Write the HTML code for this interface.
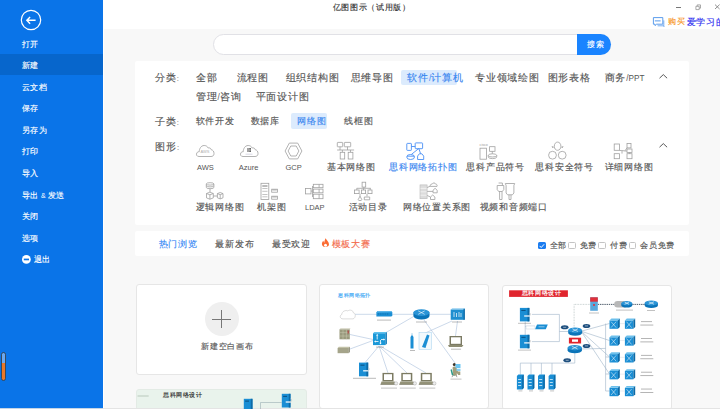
<!DOCTYPE html>
<html><head><meta charset="utf-8">
<style>
*{margin:0;padding:0;box-sizing:border-box}
html,body{width:720px;height:409px;overflow:hidden;background:#f8f8f8;font-family:"Liberation Sans",sans-serif;color:#555;position:relative}
.a{position:absolute}
.t{position:absolute;white-space:nowrap}
.t span{line-height:inherit}
.c{-webkit-text-stroke:0.15px currentColor}
.card{position:absolute;background:#fff;border-radius:2px}
svg{position:absolute;overflow:visible}
</style></head><body>
<div class="a" style="left:0;top:0;width:103px;height:409px;background:#0a74e8"></div>
<div class="a" style="left:0;top:54px;width:103px;height:21px;background:#0766cc"></div>
<svg style="left:20px;top:9px" width="22" height="22" viewBox="0 0 22 22"><circle cx="11" cy="11" r="9.7" fill="none" stroke="#fff" stroke-width="1.2"/><path d="M6.8 11.3H15.6M10.1 7.9L6.8 11.3L10.1 14.7" fill="none" stroke="#fff" stroke-width="1.4"/></svg>
<div class="t" style="left:21.76px;top:39.80px;font-size:8.40px;line-height:8.40px;color:#fff;"><span class="c" style="letter-spacing:0.70px">打开</span></div>
<div class="t" style="left:21.76px;top:60.80px;font-size:8.40px;line-height:8.40px;color:#fff;"><span class="c" style="letter-spacing:0.70px">新建</span></div>
<div class="t" style="left:21.76px;top:82.80px;font-size:8.40px;line-height:8.40px;color:#fff;"><span class="c" style="letter-spacing:0.70px">云文档</span></div>
<div class="t" style="left:21.76px;top:104.30px;font-size:8.40px;line-height:8.40px;color:#fff;"><span class="c" style="letter-spacing:0.70px">保存</span></div>
<div class="t" style="left:21.76px;top:125.80px;font-size:8.40px;line-height:8.40px;color:#fff;"><span class="c" style="letter-spacing:0.70px">另存为</span></div>
<div class="t" style="left:21.76px;top:147.30px;font-size:8.40px;line-height:8.40px;color:#fff;"><span class="c" style="letter-spacing:0.70px">打印</span></div>
<div class="t" style="left:21.76px;top:168.80px;font-size:8.40px;line-height:8.40px;color:#fff;"><span class="c" style="letter-spacing:0.70px">导入</span></div>
<div class="t" style="left:21.76px;top:190.80px;font-size:8.40px;line-height:8.40px;color:#fff;"><span class="c" style="letter-spacing:0.70px">导出</span><span style="font-size:7.00px"> &amp; </span><span class="c" style="letter-spacing:0.70px">发送</span></div>
<div class="t" style="left:21.76px;top:212.30px;font-size:8.40px;line-height:8.40px;color:#fff;"><span class="c" style="letter-spacing:0.70px">关闭</span></div>
<div class="t" style="left:21.76px;top:233.80px;font-size:8.40px;line-height:8.40px;color:#fff;"><span class="c" style="letter-spacing:0.70px">选项</span></div>
<svg style="left:22px;top:255px" width="9" height="9"><circle cx="4.4" cy="4.4" r="4.4" fill="#fff"/><rect x="1.8" y="3.6" width="5.2" height="1.7" fill="#0a74e8"/></svg>
<div class="t" style="left:33.56px;top:255.30px;font-size:8.40px;line-height:8.40px;color:#fff;"><span class="c" style="letter-spacing:0.70px">退出</span></div>
<div class="a" style="left:1px;top:352px;width:5px;height:29px;border:1px solid #3a4a5a;border-radius:3px;background:linear-gradient(#6aa8f0 0 36%,#e8782a 36%)"></div>
<div class="a" style="left:103px;top:0;width:1px;height:409px;background:#fff"></div>
<div class="a" style="left:104px;top:0;width:616px;height:29px;background:#fff"></div>
<div class="t" style="left:332.83px;top:3.96px;font-size:7.68px;line-height:7.68px;color:#333;"><span class="c" style="letter-spacing:0.64px">亿图图示（试用版）</span></div>
<div class="a" style="left:676px;top:7px;width:4.5px;height:0.8px;background:#777"></div>
<svg style="left:695px;top:3.5px" width="7" height="7"><path d="M0.9 2.3h3.3v3.3h-3.3z M2.2 2.3v-1.4h3.3v3.3h-1.3" fill="none" stroke="#888" stroke-width="0.7"/></svg>
<svg style="left:714px;top:4px" width="7" height="6"><path d="M1 0.6l4.6 4.4M5.6 0.6l-4.6 4.4" stroke="#777" stroke-width="0.8"/></svg>
<svg style="left:652px;top:16px" width="14" height="12"><path d="M1.4 1.6h9.4v6.6h-6.2l-1.6 1.4v-1.4h-1.6z" fill="#fff" stroke="#4a92ea" stroke-width="0.9" stroke-linejoin="round"/><rect x="2.8" y="4.2" width="5.8" height="1.3" fill="#7fb2f0"/><path d="M11.8 4.4v5.4h-6.2M11.8 9.8l0.3 1.2" fill="none" stroke="#5a9cec" stroke-width="0.8"/></svg>
<div class="t" style="left:668.08px;top:18.39px;font-size:8.22px;line-height:8.22px;color:#f7941d;"><span class="c" style="letter-spacing:0.69px">购买</span></div>
<div class="t" style="left:686.74px;top:18.18px;font-size:8.64px;line-height:8.64px;color:#3030f0;"><span class="c" style="letter-spacing:0.72px">爱学习的</span><span style="font-size:7.00px">...</span></div>
<div class="a" style="left:213px;top:34px;width:398px;height:21px;border:1px solid #e1e1e6;border-radius:11px;background:#fff"></div>
<div class="a" style="left:577px;top:34px;width:34px;height:21px;border-radius:0 11px 11px 0;background:#1a84ff"></div>
<div class="t" style="left:587.30px;top:40.61px;font-size:7.98px;line-height:7.98px;color:#fff;"><span class="c" style="letter-spacing:0.67px">搜索</span></div>
<div class="card" style="left:135px;top:61px;width:554px;height:164px"></div>
<div class="a" style="left:401px;top:69.5px;width:56px;height:15.5px;background:#dcebfd;border-radius:2px"></div>
<div class="a" style="left:291px;top:113px;width:36px;height:16px;background:#dcebfd;border-radius:2px"></div>
<div class="t" style="left:155.14px;top:72.90px;font-size:9.60px;line-height:9.60px;color:#555;"><span class="c" style="letter-spacing:0.80px">分类</span><span style="font-size:7.50px">:</span></div>
<div class="t" style="left:195.84px;top:72.90px;font-size:9.60px;line-height:9.60px;color:#555;"><span class="c" style="letter-spacing:0.80px">全部</span></div>
<div class="t" style="left:236.64px;top:72.90px;font-size:9.60px;line-height:9.60px;color:#555;"><span class="c" style="letter-spacing:0.80px">流程图</span></div>
<div class="t" style="left:285.64px;top:72.90px;font-size:9.60px;line-height:9.60px;color:#555;"><span class="c" style="letter-spacing:0.80px">组织结构图</span></div>
<div class="t" style="left:350.64px;top:72.90px;font-size:9.60px;line-height:9.60px;color:#555;"><span class="c" style="letter-spacing:0.80px">思维导图</span></div>
<div class="t" style="left:475.04px;top:72.90px;font-size:9.60px;line-height:9.60px;color:#555;"><span class="c" style="letter-spacing:0.80px">专业领域绘图</span></div>
<div class="t" style="left:547.64px;top:72.90px;font-size:9.60px;line-height:9.60px;color:#555;"><span class="c" style="letter-spacing:0.80px">图形表格</span></div>
<div class="t" style="left:604.64px;top:72.90px;font-size:9.60px;line-height:9.60px;color:#555;"><span class="c" style="letter-spacing:0.80px">商务</span><span style="font-size:8.20px">/PPT</span></div>
<div class="t" style="left:407.44px;top:72.60px;font-size:9.60px;line-height:9.60px;color:#3a86f0;"><span class="c" style="letter-spacing:0.80px">软件</span><span style="font-size:8.20px">/</span><span class="c" style="letter-spacing:0.80px">计算机</span></div>
<div class="t" style="left:195.84px;top:91.50px;font-size:9.60px;line-height:9.60px;color:#555;"><span class="c" style="letter-spacing:0.80px">管理</span><span style="font-size:8.20px">/</span><span class="c" style="letter-spacing:0.80px">咨询</span></div>
<div class="t" style="left:255.64px;top:91.50px;font-size:9.60px;line-height:9.60px;color:#555;"><span class="c" style="letter-spacing:0.80px">平面设计图</span></div>
<div class="t" style="left:155.14px;top:116.90px;font-size:9.60px;line-height:9.60px;color:#555;"><span class="c" style="letter-spacing:0.80px">子类</span><span style="font-size:7.50px">:</span></div>
<div class="t" style="left:195.70px;top:117.20px;font-size:9.00px;line-height:9.00px;color:#555;"><span class="c" style="letter-spacing:0.75px">软件开发</span></div>
<div class="t" style="left:250.70px;top:117.20px;font-size:9.00px;line-height:9.00px;color:#555;"><span class="c" style="letter-spacing:0.75px">数据库</span></div>
<div class="t" style="left:344.30px;top:117.20px;font-size:9.00px;line-height:9.00px;color:#555;"><span class="c" style="letter-spacing:0.75px">线框图</span></div>
<div class="t" style="left:297.20px;top:117.00px;font-size:9.00px;line-height:9.00px;color:#3a86f0;"><span class="c" style="letter-spacing:0.75px">网络图</span></div>
<div class="t" style="left:155.44px;top:141.90px;font-size:9.60px;line-height:9.60px;color:#555;"><span class="c" style="letter-spacing:0.80px">图形</span><span style="font-size:7.50px">:</span></div>
<svg style="left:659px;top:73.6px" width="10" height="6"><path d="M0.5 4.2L4.3 0.6L8.1 4.2" fill="none" stroke="#444" stroke-width="0.9"/></svg>
<svg style="left:659px;top:142.9px" width="10" height="6"><path d="M0.5 4.2L4.3 0.6L8.1 4.2" fill="none" stroke="#444" stroke-width="0.9"/></svg>
<div class="t" style="left:196.92px;top:163.19px;font-size:8.82px;line-height:8.82px;color:#555;"><span style="font-size:7.50px">AWS</span></div>
<div class="t" style="left:238.72px;top:163.19px;font-size:8.82px;line-height:8.82px;color:#555;"><span style="font-size:7.50px">Azure</span></div>
<div class="t" style="left:285.52px;top:163.19px;font-size:8.82px;line-height:8.82px;color:#555;"><span style="font-size:7.50px">GCP</span></div>
<div class="t" style="left:326.92px;top:163.19px;font-size:8.82px;line-height:8.82px;color:#555;"><span class="c" style="letter-spacing:0.74px">基本网络图</span></div>
<div class="t" style="left:389.22px;top:163.19px;font-size:8.82px;line-height:8.82px;color:#3a86f0;"><span class="c" style="letter-spacing:0.74px">思科网络拓扑图</span></div>
<div class="t" style="left:466.32px;top:163.19px;font-size:8.82px;line-height:8.82px;color:#555;"><span class="c" style="letter-spacing:0.74px">思科产品符号</span></div>
<div class="t" style="left:535.42px;top:163.19px;font-size:8.82px;line-height:8.82px;color:#555;"><span class="c" style="letter-spacing:0.74px">思科安全符号</span></div>
<div class="t" style="left:604.72px;top:163.19px;font-size:8.82px;line-height:8.82px;color:#555;"><span class="c" style="letter-spacing:0.74px">详细网络图</span></div>
<div class="t" style="left:195.72px;top:203.19px;font-size:8.82px;line-height:8.82px;color:#555;"><span class="c" style="letter-spacing:0.74px">逻辑网络图</span></div>
<div class="t" style="left:257.22px;top:203.19px;font-size:8.82px;line-height:8.82px;color:#555;"><span class="c" style="letter-spacing:0.74px">机架图</span></div>
<div class="t" style="left:305.02px;top:203.19px;font-size:8.82px;line-height:8.82px;color:#555;"><span style="font-size:7.50px">LDAP</span></div>
<div class="t" style="left:348.62px;top:203.19px;font-size:8.82px;line-height:8.82px;color:#555;"><span class="c" style="letter-spacing:0.74px">活动目录</span></div>
<div class="t" style="left:403.02px;top:203.19px;font-size:8.82px;line-height:8.82px;color:#555;"><span class="c" style="letter-spacing:0.74px">网络位置关系图</span></div>
<div class="t" style="left:479.72px;top:203.19px;font-size:8.82px;line-height:8.82px;color:#555;"><span class="c" style="letter-spacing:0.74px">视频和音频端口</span></div>
<svg style="left:0;top:0" width="720" height="409"><path transform="translate(196 145) scale(1 1)" d="M3 11.5 C0.5 11.5 0 9.5 0.8 8 C1.5 6.8 2.5 6.6 3.2 6.8 C3.3 4 4.8 0.5 8.2 0.5 C10.5 0.5 11.6 1.8 12.2 3 C13.5 2.5 15 3.3 15.3 4.8 C17 5 18 6.5 18 8.5 C18 10.5 16.8 11.5 15 11.5 Z" fill="none" stroke="#a0a0a0" stroke-width="0.8"/><text x="200.5" y="152.8" font-size="4" fill="#b0b0b0" font-family="Liberation Sans">AWS</text><path transform="translate(240 145) scale(1 1.0)" d="M3 11.5 C0.5 11.5 0 9.5 0.8 8 C1.5 6.8 2.5 6.6 3.2 6.8 C3.3 4 4.8 0.5 8.2 0.5 C10.5 0.5 11.6 1.8 12.2 3 C13.5 2.5 15 3.3 15.3 4.8 C17 5 18 6.5 18 8.5 C18 10.5 16.8 11.5 15 11.5 Z" fill="none" stroke="#a0a0a0" stroke-width="0.8"/><path d="M247.2 148.3h1.6v1.5h-1.6zM249.2 148.1h1.8v1.7h-1.8zM247.2 150.2h1.6v1.5h-1.6zM249.2 150.2h1.8v1.7h-1.8z" fill="#666"/><path d="M245.5 154.2h7" stroke="#c8c8d8" stroke-width="0.7"/><path d="M285.1 151 L289.3 143.1 L297.7 143.1 L301.9 151 L297.7 158.9 L289.3 158.9 Z" fill="none" stroke="#a0a0a0" stroke-width="0.8"/><path d="M288.1 151 L290.8 146 L296.2 146 L298.9 151 L296.2 156 L290.8 156 Z" fill="none" stroke="#a0a0a0" stroke-width="0.8"/><rect x="337.3" y="142.4" width="5.4" height="4.4" rx="0.5" fill="none" stroke="#a0a0a0" stroke-width="0.8"/><rect x="344.3" y="142.4" width="6.4" height="4.4" rx="0.5" fill="none" stroke="#a0a0a0" stroke-width="0.8"/><path d="M340 146.8v3.2M347.5 146.8v3.2M337.1 150h17M342.4 150v2M350.5 150v2" fill="none" stroke="#a0a0a0" stroke-width="0.8"/><rect x="340.2" y="152.3" width="4.5" height="6.7" fill="none" stroke="#a0a0a0" stroke-width="0.8"/><rect x="348.2" y="152.3" width="4.7" height="6.7" fill="none" stroke="#a0a0a0" stroke-width="0.8"/><rect x="406.8" y="143.4" width="4.6" height="7" rx="0.6" fill="none" stroke="#4a90f5" stroke-width="0.9"/><rect x="415.2" y="142.9" width="7.4" height="5.8" rx="0.6" fill="none" stroke="#4a90f5" stroke-width="0.9"/><path d="M411.4 146.5h3.8M418.6 148.7L411.5 154.3M418.9 148.7L420.6 153.7" fill="none" stroke="#4a90f5" stroke-width="0.9"/><ellipse cx="410.6" cy="157" rx="3.9" ry="2.5" fill="none" stroke="#4a90f5" stroke-width="0.9"/><path d="M407 156.2h7.3" fill="none" stroke="#4a90f5" stroke-width="0.9"/><path d="M419.3 153.8h2.6l1.8 2.3v3.4h-6.1v-3.4z" fill="none" stroke="#4a90f5" stroke-width="0.9"/><text x="479.6" y="145.9" font-size="3.6" fill="#999" font-family="Liberation Sans">cisco</text><rect x="480" y="148.2" width="6.4" height="11" fill="none" stroke="#a0a0a0" stroke-width="0.8"/><rect x="489.6" y="146.7" width="5.4" height="4.6" fill="none" stroke="#a0a0a0" stroke-width="0.8"/><path d="M492.3 151.3v2.5" fill="none" stroke="#a0a0a0" stroke-width="0.8"/><ellipse cx="492.5" cy="155.4" rx="4.2" ry="1.6" fill="none" stroke="#a0a0a0" stroke-width="0.8"/><path d="M488.3 155.4v1.6a4.2 1.6 0 0 0 8.4 0v-1.6" fill="none" stroke="#a0a0a0" stroke-width="0.8"/><path d="M554.3 146.3c0-2.6 1.5-4.2 3.3-4.2s3.3 1.6 3.3 4.2c0 2.3-1.4 4-3.3 4s-3.3-1.7-3.3-4z" fill="none" stroke="#a0a0a0" stroke-width="0.8"/><path d="M553.8 147.2l-1.8-0.6 1 1.4M561.3 147.2l1.8-0.6-1 1.4" fill="none" stroke="#a0a0a0" stroke-width="0.8"/><circle cx="552.5" cy="155.2" r="3.9" fill="none" stroke="#a0a0a0" stroke-width="0.8"/><circle cx="562.2" cy="155.2" r="3.9" fill="none" stroke="#a0a0a0" stroke-width="0.8"/><rect x="614.2" y="144" width="5.2" height="6.3" fill="none" stroke="#a0a0a0" stroke-width="0.8"/><rect x="614.2" y="153.7" width="5.2" height="5" fill="none" stroke="#a0a0a0" stroke-width="0.8"/><rect x="627" y="143.5" width="4" height="4.4" fill="none" stroke="#a0a0a0" stroke-width="0.8"/><rect x="627" y="149" width="5" height="3.5" fill="none" stroke="#a0a0a0" stroke-width="0.8"/><rect x="627" y="153.7" width="5" height="5" fill="none" stroke="#a0a0a0" stroke-width="0.8"/><path d="M619.4 150.5h2.5l3.3 0.5h1.8M622 151v2.6M625 150.8l2-3M629.5 152.5v1.2" fill="none" stroke="#a0a0a0" stroke-width="0.8"/><ellipse cx="210.1" cy="183.9" rx="3.8" ry="1.2" fill="none" stroke="#a0a0a0" stroke-width="0.8"/><path d="M206.3 183.9v3.6a3.8 1.2 0 0 0 7.6 0v-3.6M206.3 185.7a3.8 1.2 0 0 0 7.6 0" fill="none" stroke="#a0a0a0" stroke-width="0.8"/><path d="M210 188.7v3.3" fill="none" stroke="#a0a0a0" stroke-width="0.8"/><path d="M206.5 193.5l3.4-1.3 3.4 1.3v4.4l-3.4 1.3-3.4-1.3z M206.5 193.5l3.4 1.3 3.4-1.3 M209.9 194.8v4.4" fill="none" stroke="#a0a0a0" stroke-width="0.8"/><path d="M217.4 193.6l2.8-1.1 2.8 1.1v4.2l-2.8 1.1-2.8-1.1z M217.4 193.6l2.8 1.1 2.8-1.1 M220.2 194.7v4.2 M213.3 196h4.1" fill="none" stroke="#a0a0a0" stroke-width="0.8"/><rect x="261" y="183.3" width="7.8" height="16.2" fill="none" stroke="#a0a0a0" stroke-width="0.8"/><rect x="262.3" y="185" width="5.2" height="2" fill="#bbb"/><path d="M262.3 188.5h5.2M262.3 191.3h5.2M262.3 194.5h5.2M262.3 196.8h5.2" stroke="#aaa" stroke-width="0.7"/><rect x="271.7" y="189.2" width="5.8" height="3" fill="none" stroke="#a0a0a0" stroke-width="0.8"/><rect x="271.7" y="196.2" width="5.8" height="3" fill="none" stroke="#a0a0a0" stroke-width="0.8"/><path d="M272.3 190h4.5M272.3 197h4.5" stroke="#888" stroke-width="0.6"/><rect x="305.4" y="188.4" width="5.6" height="5.5" fill="none" stroke="#a0a0a0" stroke-width="0.8"/><path d="M311 191.1h1.5M312.5 186v11" fill="none" stroke="#a0a0a0" stroke-width="0.8"/><rect x="313.3" y="184.3" width="9.7" height="3.3999999999999773" fill="none" stroke="#a0a0a0" stroke-width="0.8"/><path d="M319.1 184.3v3.3999999999999773" fill="none" stroke="#a0a0a0" stroke-width="0.8"/><rect x="313.3" y="189.1" width="9.7" height="3.700000000000017" fill="none" stroke="#a0a0a0" stroke-width="0.8"/><path d="M319.1 189.1v3.700000000000017" fill="none" stroke="#a0a0a0" stroke-width="0.8"/><rect x="313.3" y="194.2" width="9.7" height="4.5" fill="none" stroke="#a0a0a0" stroke-width="0.8"/><path d="M319.1 194.2v4.5" fill="none" stroke="#a0a0a0" stroke-width="0.8"/><rect x="362.1" y="182.2" width="3.6" height="4.9" fill="none" stroke="#a0a0a0" stroke-width="0.8"/><path d="M363.9 187.1v1.2M356.7 188.3h14.1M356.8 188.3v1.7M363.5 188.3v1.7M370.2 188.3v1.7" fill="none" stroke="#a0a0a0" stroke-width="0.8"/><rect x="354.5" y="190" width="4.6" height="3.6" fill="none" stroke="#a0a0a0" stroke-width="0.8"/><rect x="361.4" y="190" width="4.2" height="3.6" fill="none" stroke="#a0a0a0" stroke-width="0.8"/><rect x="368" y="190" width="4" height="3.6" fill="none" stroke="#a0a0a0" stroke-width="0.8"/><path d="M360 193.6v2.5l-1.8 3.5a1.8 1 0 0 0 3.6 0l-1.8-3.5M367 193.6v2.7M364.3 197h5.4v2.8h-5.4z" fill="none" stroke="#a0a0a0" stroke-width="0.8"/><rect x="420" y="184.9" width="7.1" height="13.8" fill="#dcdcdc" stroke="#bbb" stroke-width="0.6"/><path d="M420.5 188.4h6M420.5 191.8h6M420.5 195.2h6" stroke="#fff" stroke-width="0.6"/><path d="M430.3 186.4c-0.5-1.5 0.8-2.6 1.8-2.2 0.6-1.6 3-1.8 3.6 0 1-0.2 1.8 0.9 1.3 2.2z" fill="none" stroke="#a0a0a0" stroke-width="0.8"/><path d="M433 190.3l2.1-2 2.1 2v2.5h-4.2z M430.5 197l2.2-2 2.2 2v2.5h-4.4z M427.1 187.5l3.2-1.3 M427.1 191.4h5.9 M427.1 195.5l3.4 1.5" fill="none" stroke="#a0a0a0" stroke-width="0.8"/><path d="M497.2 185.5h6.6v4l-1.5 2h-3.6l-1.5-2z M498.6 183h3.8v2.5 M499.6 191.5v8h2.4v-8" fill="none" stroke="#a0a0a0" stroke-width="0.8"/><path d="M505.3 183.5h9.4l-0.8 2v7.5l-1.5 1.8h-4.8l-1.5-1.8v-7.5z M509 194.8v4.7h2v-4.7" fill="none" stroke="#a0a0a0" stroke-width="0.8"/></svg>
<div class="card" style="left:135px;top:231px;width:554px;height:25px"></div>
<div class="t" style="left:158.67px;top:239.55px;font-size:9.30px;line-height:9.30px;color:#3a8af5;"><span class="c" style="letter-spacing:0.78px">热门浏览</span></div>
<div class="t" style="left:215.37px;top:239.55px;font-size:9.30px;line-height:9.30px;color:#555;"><span class="c" style="letter-spacing:0.78px">最新发布</span></div>
<div class="t" style="left:271.87px;top:239.55px;font-size:9.30px;line-height:9.30px;color:#555;"><span class="c" style="letter-spacing:0.78px">最受欢迎</span></div>
<svg style="left:321px;top:238px" width="10" height="10"><path d="M4.6 0.2C5.3 2 8 3.6 8 6.3 8 8.1 6.5 9.1 4.6 9.1 2.6 9.1 0.9 7.9 0.9 6 0.9 4.4 1.7 3.3 2.4 2.7 2.5 3.7 2.9 4.4 3.4 4.8 3.3 3.2 3.9 1.5 4.6 0.2z" fill="#fb6b32"/><circle cx="4.5" cy="7.2" r="1.5" fill="#fff"/></svg>
<div class="t" style="left:331.67px;top:239.55px;font-size:9.30px;line-height:9.30px;color:#f36d4f;"><span class="c" style="letter-spacing:0.78px">模板大赛</span></div>
<div class="a" style="left:538px;top:241.8px;width:7.5px;height:7.5px;border-radius:1.5px;background:#1a7cf0"></div>
<svg style="left:538px;top:241.8px" width="8" height="8"><path d="M1.6 3.9L3.2 5.5L6.1 2.3" fill="none" stroke="#fff" stroke-width="1"/></svg>
<div class="a" style="left:568px;top:241.8px;width:7.7px;height:7.5px;border-radius:1.5px;border:0.8px solid #c4c4c4;background:#fff"></div>
<div class="a" style="left:598.3px;top:241.8px;width:7.7px;height:7.5px;border-radius:1.5px;border:0.8px solid #c4c4c4;background:#fff"></div>
<div class="a" style="left:628.5px;top:241.8px;width:7.7px;height:7.5px;border-radius:1.5px;border:0.8px solid #c4c4c4;background:#fff"></div>
<div class="t" style="left:549.58px;top:242.12px;font-size:8.16px;line-height:8.16px;color:#555;"><span class="c" style="letter-spacing:0.68px">全部</span></div>
<div class="t" style="left:579.78px;top:242.12px;font-size:8.16px;line-height:8.16px;color:#555;"><span class="c" style="letter-spacing:0.68px">免费</span></div>
<div class="t" style="left:609.98px;top:242.12px;font-size:8.16px;line-height:8.16px;color:#555;"><span class="c" style="letter-spacing:0.68px">付费</span></div>
<div class="t" style="left:640.18px;top:242.12px;font-size:8.16px;line-height:8.16px;color:#555;"><span class="c" style="letter-spacing:0.68px">会员免费</span></div>
<div class="card" style="left:136px;top:284px;width:171px;height:91px;border:1px solid #e6e6e6;border-radius:3px"></div>
<div class="a" style="left:204.6px;top:301.8px;width:34px;height:34px;border-radius:50%;background:#efefef"></div>
<div class="a" style="left:212.3px;top:318.7px;width:18.6px;height:1px;background:#777"></div>
<div class="a" style="left:221px;top:309.7px;width:1px;height:18.7px;background:#777"></div>
<div class="t" style="left:201.38px;top:342.92px;font-size:8.16px;line-height:8.16px;color:#555;"><span class="c" style="letter-spacing:0.68px">新建空白画布</span></div>
<div class="card" style="left:136px;top:388.5px;width:171px;height:40px;border:1px solid #e3ebe5;border-radius:3px;background:#e9f3ec"></div>
<div class="card" style="left:318.5px;top:284px;width:170.5px;height:125px;border:1px solid #e6e6e6;border-radius:3px"></div>
<div class="card" style="left:501.5px;top:284.5px;width:170px;height:125px;border:1px solid #e6e6e6;border-radius:3px"></div>
<div class="a" style="left:0;top:408px;width:720px;height:1px;background:#e4e4e4"></div>
<div class="a" style="left:0;top:408px;width:103px;height:1px;background:#c5d5e6"></div>
<svg style="left:0;top:0" width="720" height="409"><path d="M355 314.3H450.7 M386 332.5L413.6 316.5 M350 334.5L373 339.5 M350 349L373 340.5 M379 346L365 362.6 M379 346L388 373 M379 346L407 373 M380 346L426 373 M424 320L455 363 M452 321L423 334 M457.5 321L455.5 336" stroke="#a9bfdc" stroke-width="0.6" fill="none"/><path d="M343 318.9c-3 0-3.8-3.5-1.2-4.4 0-3 3.8-4.8 6-3.6 2.2-1.6 5.4-0.5 5.6 1.9 2.5 0.4 2.6 5-0.3 6.1z" fill="#fff" stroke="#c4c4c4" stroke-width="0.6"/><path d="M377.5 311h13.5l1.3 1.2v3.8l-1.3 0.6h-14.6v-4.2z" fill="#1a8ed4"/><path d="M376.5 312.4l1-1.4h13.5l1.3 1.2z" fill="#5cb6ea"/><path d="M378 314h11" stroke="#0b5f96" stroke-width="0.6" stroke-dasharray="1 0.8"/><rect x="377" y="319.6" width="14" height="1" fill="#555" opacity="0.4"/><path d="M413.4 312.599 v3.502 a8.05 3.3990000000000005 0 0 0 16.1 0 v-3.502" fill="#0b74b8"/><ellipse cx="421.45" cy="312.599" rx="8.05" ry="3.3990000000000005" fill="#2a94d6"/><path d="M418.22999999999996 310.8995l6.440000000000001 3.3990000000000005 M424.66999999999996 310.8995l-6.440000000000001 3.3990000000000005" stroke="#fff" stroke-width="0.6"/><rect x="416" y="321.5" width="11" height="1" fill="#555" opacity="0.4"/><rect x="450.7" y="309.5" width="13.5" height="10.3" fill="#1e8fd0"/><path d="M450.7 309.5l1.5-1h13l-1 1z" fill="#62b8ea"/><rect x="463.5" y="308.8" width="1.4" height="11" fill="#0f6ca8"/><path d="M454 312v5M456.5 313v4M459 312v5M461 313v4" stroke="#fff" stroke-width="0.7"/><rect x="452" y="321.5" width="10" height="1" fill="#555" opacity="0.4"/><rect x="339.5" y="329.3" width="10.3" height="10" fill="#9a9a7e"/><path d="M339.5 332.6h10.3M339.5 336h10.3M343 329.3v10M346.4 329.3v10" stroke="#c9c8b0" stroke-width="0.5"/><rect x="347.6" y="330.5" width="1.2" height="3" fill="#b54545"/><path d="M339.5 329.3l1-0.8h10l-0.7 0.8z" fill="#bdbca2"/><path d="M337.6 348h11v5.2h-11z" fill="#a5a48a"/><path d="M337.6 348l1.2-1.3h11l-1.2 1.3z" fill="#c3c2a8"/><path d="M348.6 348l1.2-1.3v5.2l-1.2 1.3z" fill="#7f7e66"/><path d="M373 333.2h12.4v11.9h-12.4z" fill="#1a98d8"/><path d="M373 333.2l1.3-1.3h12.6l-1.5 1.3z" fill="#5cc0ee"/><path d="M385.4 333.2l1.5-1.3v11.8l-1.5 1.4z" fill="#0f78b8"/><path d="M377.2 339.5v-4.5M381 339.5h3M378.5 341.5h-3.5M380.5 340v3.3" stroke="#fff" stroke-width="0.8"/><path d="M376 335.6l1.2-1.6 1.2 1.6zM383.6 338.3l1.4 1.2-1.4 1.2zM375.6 340.3l-1.4 1.2 1.4 1.2zM379.3 342.8l1.2 1.6 1.2-1.6z" fill="#fff"/><rect x="376" y="346.6" width="8" height="1" fill="#555" opacity="0.4"/><path d="M410.5 337l1.5-2.2 1.5 2.2v11.5h-3z" fill="#1a8ed4"/><path d="M412 334.8v-1.5" stroke="#1a8ed4" stroke-width="0.5"/><rect x="419" y="332.5" width="12.3" height="16.8" fill="#f2f9fd" stroke="#9fd0ee" stroke-width="0.5"/><path d="M422 347l5-12.5 2.5 1-4 12.5z" fill="#1a8ed4"/><rect x="410" y="350" width="5" height="1" fill="#555" opacity="0.4"/><path d="M449.5 336h12.5v9h-12.5z" fill="#7b7a63"/><rect x="451" y="337.3" width="9.6" height="6.5" fill="#fff"/><path d="M448 345h15.5l-1.5 2h-13z" fill="#8d8c72"/><rect x="451" y="348.7" width="10" height="1" fill="#555" opacity="0.4"/><rect x="359" y="362.6" width="9.2" height="13.7" fill="#1a8ed4"/><rect x="366.36" y="362.6" width="1.8399999999999999" height="13.7" fill="#0d6aa6"/><rect x="360.38" y="364.65500000000003" width="4.14" height="1" fill="#0a4f80"/><path d="M363.14 370.82000000000005 h5.52" stroke="#fff" stroke-width="1.2"/><path d="M368.2 370.82000000000005 c1.5 -0.5 1.5 -3 0 -3.5" stroke="#bbb" stroke-width="0.5" fill="none"/><rect x="353" y="377.8" width="23" height="1" fill="#555" opacity="0.4"/><rect x="382.5" y="372.9" width="11" height="8.5" fill="#7c7b62"/><rect x="384.0" y="374.2" width="8" height="5.8" fill="#fff"/><path d="M381.5 381.4 h13 l3 3 h-17 z" fill="#949379"/><path d="M380.5 384.4 h16" stroke="#6d6c58" stroke-width="0.6"/><circle cx="396.0" cy="383.4" r="1.7" fill="#eee" stroke="#999" stroke-width="0.4"/><rect x="381.0" y="387.6" width="16" height="1" fill="#555" opacity="0.36000000000000004"/><rect x="401.3" y="372.9" width="11" height="8.5" fill="#7c7b62"/><rect x="402.8" y="374.2" width="8" height="5.8" fill="#fff"/><path d="M400.3 381.4 h13 l3 3 h-17 z" fill="#949379"/><path d="M399.3 384.4 h16" stroke="#6d6c58" stroke-width="0.6"/><circle cx="414.8" cy="383.4" r="1.7" fill="#eee" stroke="#999" stroke-width="0.4"/><rect x="399.8" y="387.6" width="16" height="1" fill="#555" opacity="0.36000000000000004"/><rect x="420.8" y="372.9" width="11" height="8.5" fill="#7c7b62"/><rect x="422.3" y="374.2" width="8" height="5.8" fill="#fff"/><path d="M419.8 381.4 h13 l3 3 h-17 z" fill="#949379"/><path d="M418.8 384.4 h16" stroke="#6d6c58" stroke-width="0.6"/><circle cx="434.3" cy="383.4" r="1.7" fill="#eee" stroke="#999" stroke-width="0.4"/><rect x="419.3" y="387.6" width="16" height="1" fill="#555" opacity="0.36000000000000004"/><path d="M451.2 369.5l1.2 4.8 2.5 0.6" stroke="#2a9a8a" stroke-width="1.5" fill="none"/><circle cx="454.3" cy="364.6" r="1.5" fill="#3d3428"/><path d="M452.5 367.5c1-1.3 3.5-1.3 4 0.5l1.5 3.5h2.3v3.5h-2l-1.5-2v2.5h-3.5z" fill="#a09e7c"/><path d="M455.5 364h5v4.2h-5z" fill="#6cc6f2"/><path d="M456.5 369h4v2h-4z" fill="#8ad0f0"/><path d="M453 375l-1 2.2M456 375l1 2.2" stroke="#666" stroke-width="0.6"/><rect x="450.5" y="378.6" width="11" height="1" fill="#555" opacity="0.36000000000000004"/><rect x="509.1" y="290.3" width="58.8" height="6.6" fill="#e0252e"/><path d="M531.9 314.4H559.4V341.6H531.9 M559.4 331.5H568 M525.2 321.5V335 M525.2 326.3H535 M582 331L609.5 323.5 M582 331.5L609.5 340.5 M582 332L609.5 357 M582 332.5L609.5 374 M581 349L605.6 348.4 M605.6 323.5V391 M605.6 357H609.5 M605.6 374H609.5 M605.6 391H609.5 M574.8 353.2V363.1H520.3 M520.3 363.1V374.6 M531 363.1V374.6 M541.4 363.1V374.6 M552 363.1V374.6" stroke="#9db4c8" stroke-width="0.6" fill="none"/><path d="M574.1 327.4V304.4H590.2" stroke="#9aa" stroke-width="0.6" stroke-dasharray="0.8 0.8" fill="none"/><path d="M597.8 304.4H614.7 M632.3 304.4H644.7" stroke="#3a4a5a" stroke-width="0.9" stroke-dasharray="1.4 0.8" fill="none"/><rect x="519.9" y="307.9" width="9.5" height="13.5" fill="#1a8ed4"/><rect x="527.5" y="307.9" width="1.9000000000000001" height="13.5" fill="#0d6aa6"/><rect x="521.3249999999999" y="309.92499999999995" width="4.275" height="1" fill="#0a4f80"/><path d="M524.175 316.0 h5.7" stroke="#fff" stroke-width="1.2"/><path d="M529.4 316.0 c1.5 -0.5 1.5 -3 0 -3.5" stroke="#bbb" stroke-width="0.5" fill="none"/><rect x="519.9" y="334.8" width="9.5" height="13.5" fill="#1a8ed4"/><rect x="527.5" y="334.8" width="1.9000000000000001" height="13.5" fill="#0d6aa6"/><rect x="521.3249999999999" y="336.825" width="4.275" height="1" fill="#0a4f80"/><path d="M524.175 342.90000000000003 h5.7" stroke="#fff" stroke-width="1.2"/><path d="M529.4 342.90000000000003 c1.5 -0.5 1.5 -3 0 -3.5" stroke="#bbb" stroke-width="0.5" fill="none"/><rect x="518" y="322.8" width="13" height="1" fill="#555" opacity="0.36000000000000004"/><rect x="518" y="349.6" width="13" height="1" fill="#555" opacity="0.36000000000000004"/><path d="M537 324.4h10.8l-2 4.9h-10.8z" fill="#1a8ed4"/><path d="M538.5 326.8h6" stroke="#fff" stroke-width="0.5"/><path d="M526 326h9v3h-9z" fill="#fff" stroke="#b5c5d5" stroke-width="0.4"/><path d="M568.2 330.13899999999995 v2.822 a6.95 2.7390000000000003 0 0 0 13.9 0 v-2.822" fill="#0b74b8"/><ellipse cx="575.1500000000001" cy="330.13899999999995" rx="6.95" ry="2.7390000000000003" fill="#2a94d6"/><path d="M572.37 328.76949999999994l5.5600000000000005 2.7390000000000003 M577.9300000000001 328.76949999999994l-5.5600000000000005 2.7390000000000003" stroke="#fff" stroke-width="0.6"/><rect x="568.9" y="337.7" width="12.2" height="5.8" fill="#e0252e"/><rect x="572" y="339.4" width="6" height="2.4" fill="#fff"/><path d="M567.6 347.706 v2.7879999999999994 a7.15 2.706 0 0 0 14.3 0 v-2.7879999999999994" fill="#0b74b8"/><ellipse cx="574.75" cy="347.706" rx="7.15" ry="2.706" fill="#2a94d6"/><path d="M571.89 346.353l5.720000000000001 2.706 M577.61 346.353l-5.720000000000001 2.706" stroke="#fff" stroke-width="0.6"/><ellipse cx="564.7" cy="327.3" rx="3.8" ry="2" fill="#1e4f7e"/><path d="M563.2 327.3 h3" stroke="#fff" stroke-width="0.5"/><ellipse cx="586.5" cy="325.9" rx="3.8" ry="2" fill="#1e4f7e"/><path d="M585.0 325.9 h3" stroke="#fff" stroke-width="0.5"/><ellipse cx="586.5" cy="345.9" rx="3.8" ry="2" fill="#1e4f7e"/><path d="M585.0 345.9 h3" stroke="#fff" stroke-width="0.5"/><ellipse cx="567.2" cy="360.3" rx="3.8" ry="2" fill="#1e4f7e"/><path d="M565.7 360.3 h3" stroke="#fff" stroke-width="0.5"/><rect x="590.2" y="297.3" width="7.6" height="13.5" fill="#5aa8dc"/><rect x="590.2" y="297.3" width="7.6" height="4.4" fill="#e0303a"/><circle cx="594" cy="305" r="1" fill="#e0303a"/><rect x="589" y="312.5" width="10" height="1" fill="#555" opacity="0.36000000000000004"/><path d="M617.5 301h8v6.6h-8a3.3 3.3 0 0 1 0-6.6z" fill="#b8b8b8"/><path d="M621.3 303.178 v2.2439999999999998 a5.5 2.178 0 0 0 11 0 v-2.2439999999999998" fill="#0b74b8"/><ellipse cx="626.8" cy="303.178" rx="5.5" ry="2.178" fill="#2a94d6"/><path d="M624.5999999999999 302.089l4.4 2.178 M629.0 302.089l-4.4 2.178" stroke="#fff" stroke-width="0.6"/><rect x="616" y="309.6" width="17" height="1" fill="#555" opacity="0.36000000000000004"/><path d="M644.7 303.009 v2.4819999999999993 a6.6 2.4090000000000003 0 0 0 13.2 0 v-2.4819999999999993" fill="#0b74b8"/><ellipse cx="651.3000000000001" cy="303.009" rx="6.6" ry="2.4090000000000003" fill="#2a94d6"/><path d="M648.6600000000001 301.8045l5.28 2.4090000000000003 M653.94 301.8045l-5.28 2.4090000000000003" stroke="#fff" stroke-width="0.6"/><rect x="647" y="310" width="8" height="1" fill="#555" opacity="0.36000000000000004"/><path d="M609.5 320.454 h8.446000000000002 v8.346 h-8.446000000000002 z" fill="#1a8ed4"/><path d="M609.5 320.454 l1.854 -1.854 h8.446000000000002 l-1.854 1.854 z" fill="#6cc0ec"/><path d="M617.9459999999999 320.454 l1.854 -1.854 v8.346 l-1.854 1.854 z" fill="#0d6aa6"/><path d="M611.045 321.654 l5.15 5.946 M616.195 321.654 l-5.15 5.946" stroke="#fff" stroke-width="0.5"/><path d="M624.9 320.454 h8.446000000000002 v8.346 h-8.446000000000002 z" fill="#1a8ed4"/><path d="M624.9 320.454 l1.854 -1.854 h8.446000000000002 l-1.854 1.854 z" fill="#6cc0ec"/><path d="M633.3459999999999 320.454 l1.854 -1.854 v8.346 l-1.854 1.854 z" fill="#0d6aa6"/><path d="M626.4449999999999 321.654 l5.15 5.946 M631.595 321.654 l-5.15 5.946" stroke="#fff" stroke-width="0.5"/><rect x="641" y="321.20000000000005" width="11" height="0.9" fill="#444" opacity="0.44000000000000006"/><rect x="640.3" y="324.6" width="13" height="0.9" fill="#444" opacity="0.44000000000000006"/><path d="M620 323.6h5" stroke="#d0d8e0" stroke-width="0.5"/><path d="M609.5 337.30400000000003 h8.446000000000002 v8.346 h-8.446000000000002 z" fill="#1a8ed4"/><path d="M609.5 337.30400000000003 l1.854 -1.854 h8.446000000000002 l-1.854 1.854 z" fill="#6cc0ec"/><path d="M617.9459999999999 337.30400000000003 l1.854 -1.854 v8.346 l-1.854 1.854 z" fill="#0d6aa6"/><path d="M611.045 338.504 l5.15 5.946 M616.195 338.504 l-5.15 5.946" stroke="#fff" stroke-width="0.5"/><path d="M624.9 337.30400000000003 h8.446000000000002 v8.346 h-8.446000000000002 z" fill="#1a8ed4"/><path d="M624.9 337.30400000000003 l1.854 -1.854 h8.446000000000002 l-1.854 1.854 z" fill="#6cc0ec"/><path d="M633.3459999999999 337.30400000000003 l1.854 -1.854 v8.346 l-1.854 1.854 z" fill="#0d6aa6"/><path d="M626.4449999999999 338.504 l5.15 5.946 M631.595 338.504 l-5.15 5.946" stroke="#fff" stroke-width="0.5"/><rect x="641" y="338.05000000000007" width="11" height="0.9" fill="#444" opacity="0.44000000000000006"/><rect x="640.3" y="341.45000000000005" width="13" height="0.9" fill="#444" opacity="0.44000000000000006"/><path d="M620 340.45000000000005h5" stroke="#d0d8e0" stroke-width="0.5"/><path d="M609.5 354.154 h8.446000000000002 v8.346 h-8.446000000000002 z" fill="#1a8ed4"/><path d="M609.5 354.154 l1.854 -1.854 h8.446000000000002 l-1.854 1.854 z" fill="#6cc0ec"/><path d="M617.9459999999999 354.154 l1.854 -1.854 v8.346 l-1.854 1.854 z" fill="#0d6aa6"/><path d="M611.045 355.354 l5.15 5.946 M616.195 355.354 l-5.15 5.946" stroke="#fff" stroke-width="0.5"/><path d="M624.9 354.154 h8.446000000000002 v8.346 h-8.446000000000002 z" fill="#1a8ed4"/><path d="M624.9 354.154 l1.854 -1.854 h8.446000000000002 l-1.854 1.854 z" fill="#6cc0ec"/><path d="M633.3459999999999 354.154 l1.854 -1.854 v8.346 l-1.854 1.854 z" fill="#0d6aa6"/><path d="M626.4449999999999 355.354 l5.15 5.946 M631.595 355.354 l-5.15 5.946" stroke="#fff" stroke-width="0.5"/><rect x="641" y="354.90000000000003" width="11" height="0.9" fill="#444" opacity="0.44000000000000006"/><rect x="640.3" y="358.3" width="13" height="0.9" fill="#444" opacity="0.44000000000000006"/><path d="M620 357.3h5" stroke="#d0d8e0" stroke-width="0.5"/><path d="M609.5 371.004 h8.446000000000002 v8.346 h-8.446000000000002 z" fill="#1a8ed4"/><path d="M609.5 371.004 l1.854 -1.854 h8.446000000000002 l-1.854 1.854 z" fill="#6cc0ec"/><path d="M617.9459999999999 371.004 l1.854 -1.854 v8.346 l-1.854 1.854 z" fill="#0d6aa6"/><path d="M611.045 372.204 l5.15 5.946 M616.195 372.204 l-5.15 5.946" stroke="#fff" stroke-width="0.5"/><path d="M624.9 371.004 h8.446000000000002 v8.346 h-8.446000000000002 z" fill="#1a8ed4"/><path d="M624.9 371.004 l1.854 -1.854 h8.446000000000002 l-1.854 1.854 z" fill="#6cc0ec"/><path d="M633.3459999999999 371.004 l1.854 -1.854 v8.346 l-1.854 1.854 z" fill="#0d6aa6"/><path d="M626.4449999999999 372.204 l5.15 5.946 M631.595 372.204 l-5.15 5.946" stroke="#fff" stroke-width="0.5"/><rect x="641" y="371.75000000000006" width="11" height="0.9" fill="#444" opacity="0.44000000000000006"/><rect x="640.3" y="375.15000000000003" width="13" height="0.9" fill="#444" opacity="0.44000000000000006"/><path d="M620 374.15000000000003h5" stroke="#d0d8e0" stroke-width="0.5"/><path d="M609.5 387.854 h8.446000000000002 v8.346 h-8.446000000000002 z" fill="#1a8ed4"/><path d="M609.5 387.854 l1.854 -1.854 h8.446000000000002 l-1.854 1.854 z" fill="#6cc0ec"/><path d="M617.9459999999999 387.854 l1.854 -1.854 v8.346 l-1.854 1.854 z" fill="#0d6aa6"/><path d="M611.045 389.054 l5.15 5.946 M616.195 389.054 l-5.15 5.946" stroke="#fff" stroke-width="0.5"/><path d="M624.9 387.854 h8.446000000000002 v8.346 h-8.446000000000002 z" fill="#1a8ed4"/><path d="M624.9 387.854 l1.854 -1.854 h8.446000000000002 l-1.854 1.854 z" fill="#6cc0ec"/><path d="M633.3459999999999 387.854 l1.854 -1.854 v8.346 l-1.854 1.854 z" fill="#0d6aa6"/><path d="M626.4449999999999 389.054 l5.15 5.946 M631.595 389.054 l-5.15 5.946" stroke="#fff" stroke-width="0.5"/><rect x="641" y="388.6" width="11" height="0.9" fill="#444" opacity="0.44000000000000006"/><rect x="640.3" y="392.0" width="13" height="0.9" fill="#444" opacity="0.44000000000000006"/><path d="M620 391.0h5" stroke="#d0d8e0" stroke-width="0.5"/><path d="M516.9 376.1 l1.5 -1.5 h5.3 v13.4 l-1.5 1.5 h-5.3z" fill="#1a8ed4"/><path d="M522.1999999999999 376.1 l1.5 -1.5 v13.4 l-1.5 1.5z" fill="#0d6aa6"/><path d="M518.1 379.5h3M518.1 382.5h3M518.1 385.5h3" stroke="#fff" stroke-width="0.7"/><rect x="518.4" y="390.4" width="4" height="1" fill="#555" opacity="0.36000000000000004"/><path d="M527.5 376.1 l1.5 -1.5 h5.3 v13.4 l-1.5 1.5 h-5.3z" fill="#1a8ed4"/><path d="M532.8 376.1 l1.5 -1.5 v13.4 l-1.5 1.5z" fill="#0d6aa6"/><path d="M528.7 379.5h3M528.7 382.5h3M528.7 385.5h3" stroke="#fff" stroke-width="0.7"/><rect x="529.0" y="390.4" width="4" height="1" fill="#555" opacity="0.36000000000000004"/><path d="M538 376.1 l1.5 -1.5 h5.3 v13.4 l-1.5 1.5 h-5.3z" fill="#1a8ed4"/><path d="M543.3 376.1 l1.5 -1.5 v13.4 l-1.5 1.5z" fill="#0d6aa6"/><path d="M539.2 379.5h3M539.2 382.5h3M539.2 385.5h3" stroke="#fff" stroke-width="0.7"/><rect x="539.5" y="390.4" width="4" height="1" fill="#555" opacity="0.36000000000000004"/><path d="M548.6 376.1 l1.5 -1.5 h5.3 v13.4 l-1.5 1.5 h-5.3z" fill="#1a8ed4"/><path d="M553.9 376.1 l1.5 -1.5 v13.4 l-1.5 1.5z" fill="#0d6aa6"/><path d="M549.8000000000001 379.5h3M549.8000000000001 382.5h3M549.8000000000001 385.5h3" stroke="#fff" stroke-width="0.7"/><rect x="550.1" y="390.4" width="4" height="1" fill="#555" opacity="0.36000000000000004"/><path d="M137.5 396h11.2" stroke="#a8b8ab" stroke-width="0.7"/><path d="M260.5 409V402.5H281.7" stroke="#8aa0a8" stroke-width="0.5" fill="none"/><rect x="243.8" y="398.8" width="8.7" height="12" fill="#1a8ed4"/><rect x="250.76000000000002" y="398.8" width="1.74" height="12" fill="#0d6aa6"/><rect x="245.10500000000002" y="400.6" width="3.9149999999999996" height="1" fill="#0a4f80"/><rect x="281.8" y="393.8" width="8.7" height="13.7" fill="#1a8ed4"/><rect x="288.76" y="393.8" width="1.74" height="13.7" fill="#0d6aa6"/><rect x="283.105" y="395.855" width="3.9149999999999996" height="1" fill="#0a4f80"/><path d="M285.71500000000003 402.02 h5.22" stroke="#fff" stroke-width="1.2"/><path d="M290.5 402.02 c1.5 -0.5 1.5 -3 0 -3.5" stroke="#bbb" stroke-width="0.5" fill="none"/></svg>
<div class="t" style="left:338.27px;top:293.06px;font-size:5.28px;line-height:5.28px;color:#3fa9f5;"><span class="c" style="letter-spacing:0.44px">思科网络拓扑</span></div>
<div class="t" style="left:521.95px;top:290.36px;font-size:6.48px;line-height:6.48px;color:#fff;"><span class="c" style="letter-spacing:0.54px">思科网络设计</span></div>
<div class="t" style="left:163.31px;top:393.06px;font-size:5.88px;line-height:5.88px;color:#333;"><span class="c" style="letter-spacing:0.49px">思科网络设计</span></div>
</body></html>
